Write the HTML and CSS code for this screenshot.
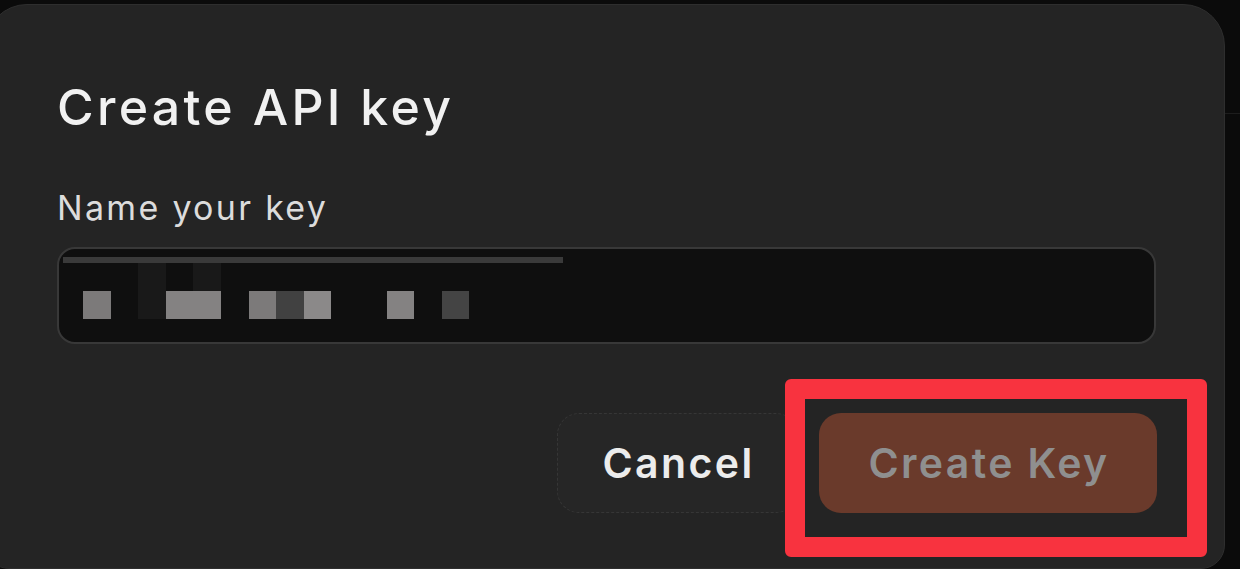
FILE: index.html
```html
<!DOCTYPE html>
<html lang="en">
<head>
<meta charset="utf-8">
<title>Create API key</title>
<link rel="stylesheet" href="styles.css">
</head>
<body>
<div class="page">
  <div class="dialog">
    <h1 class="title">Create API key</h1>
    <label class="label">Name your key</label>
    <div class="input">
      <div class="sel-bar"></div>
      <div class="pixels">
        <span class="px faint" style="grid-column:3;grid-row:1 / span 2"></span>
        <span class="px faint" style="grid-column:5;grid-row:1"></span>
        <span class="px g1" style="grid-column:1;grid-row:2"></span>
        <span class="px g2" style="grid-column:4 / span 2;grid-row:2"></span>
        <span class="px g1" style="grid-column:7;grid-row:2"></span>
        <span class="px d1" style="grid-column:8;grid-row:2"></span>
        <span class="px g3" style="grid-column:9;grid-row:2"></span>
        <span class="px g2" style="grid-column:12;grid-row:2"></span>
        <span class="px d2" style="grid-column:14;grid-row:2"></span>
      </div>
    </div>
    <div class="actions">
      <button class="btn btn-cancel">Cancel</button>
      <div class="highlight-wrap">
        <button class="btn btn-create">Create Key</button>
        <div class="highlight"></div>
      </div>
    </div>
  </div>
  <div class="backdrop-side"></div>
</div>
</body>
</html>
```
FILE: styles.css
```css
* { box-sizing: border-box; }
html, body {
  margin: 0;
  padding: 0;
  background: #0b0b0b;
  overflow: hidden;
  width: 1240px;
  height: 569px;
}
.page {
  display: flex;
  align-items: flex-start;
}
.dialog {
  flex: none;
  margin-left: -15px;
  margin-top: 4px;
  width: 1240px;
  height: 565px;
  background: #242424;
  border: 1px solid #2e2e2e;
  border-radius: 42px 42px 24px 24px;
  padding: 0 0 0 71px;
  font-family: "Inter", "Noto Sans", sans-serif;
  display: flex;
  flex-direction: column;
}
.title {
  margin: 66px 0 0 0;
  font-size: 50px;
  line-height: 72px;
  font-weight: 500;
  color: #f1f1f1;
  letter-spacing: 3.3px;
}
.label {
  margin-top: 45px;
  font-size: 34px;
  line-height: 40px;
  font-weight: 400;
  color: #dcdcdc;
  letter-spacing: 2.3px;
}
.input {
  margin-top: 19px;
  width: 1099px;
  height: 97px;
  border: 2px solid #383838;
  border-radius: 18px;
  background: #0f0f0f;
  padding: 8px 0 0 4px;
}
.sel-bar {
  width: 500px;
  height: 6px;
  background: #3a3a3a;
}
.pixels {
  margin-left: 20px;
  display: grid;
  grid-template-columns: repeat(14, 27.6px);
  grid-template-rows: 28px 28px;
}
.px { display: block; }
.faint { background: #191919; }
.g1 { background: #7c7a7a; }
.g2 { background: #848282; }
.g3 { background: #8b8989; }
.d1 { background: #414141; }
.d2 { background: #444444; }
.actions {
  margin-top: 69px;
  margin-right: 67px;
  display: flex;
  justify-content: flex-end;
  gap: 21px;
}
.btn {
  font-family: "Inter", "Noto Sans", sans-serif;
  height: 100px;
  border-radius: 22px;
  font-size: 41px;
  font-weight: 600;
  padding: 0 0 0 2px;
  cursor: pointer;
  letter-spacing: 2.4px;
  text-align: center;
}
.btn-cancel {
  background: #262626;
  border: 1px dashed #363636;
  color: #ececec;
  width: 241px;
}
.highlight-wrap {
  position: relative;
}
.btn-create {
  background: #6a3a2b;
  border: none;
  color: #8f8f8f;
  width: 338px;
}
.highlight {
  position: absolute;
  left: -34px;
  top: -34px;
  width: 422px;
  height: 178px;
  border: 20px solid #f8333f;
  border-radius: 6px;
  pointer-events: none;
}
.backdrop-side {
  flex: 1;
  margin-top: 113px;
  border-top: 1px solid #1d1d1d;
  height: 1px;
}
```
